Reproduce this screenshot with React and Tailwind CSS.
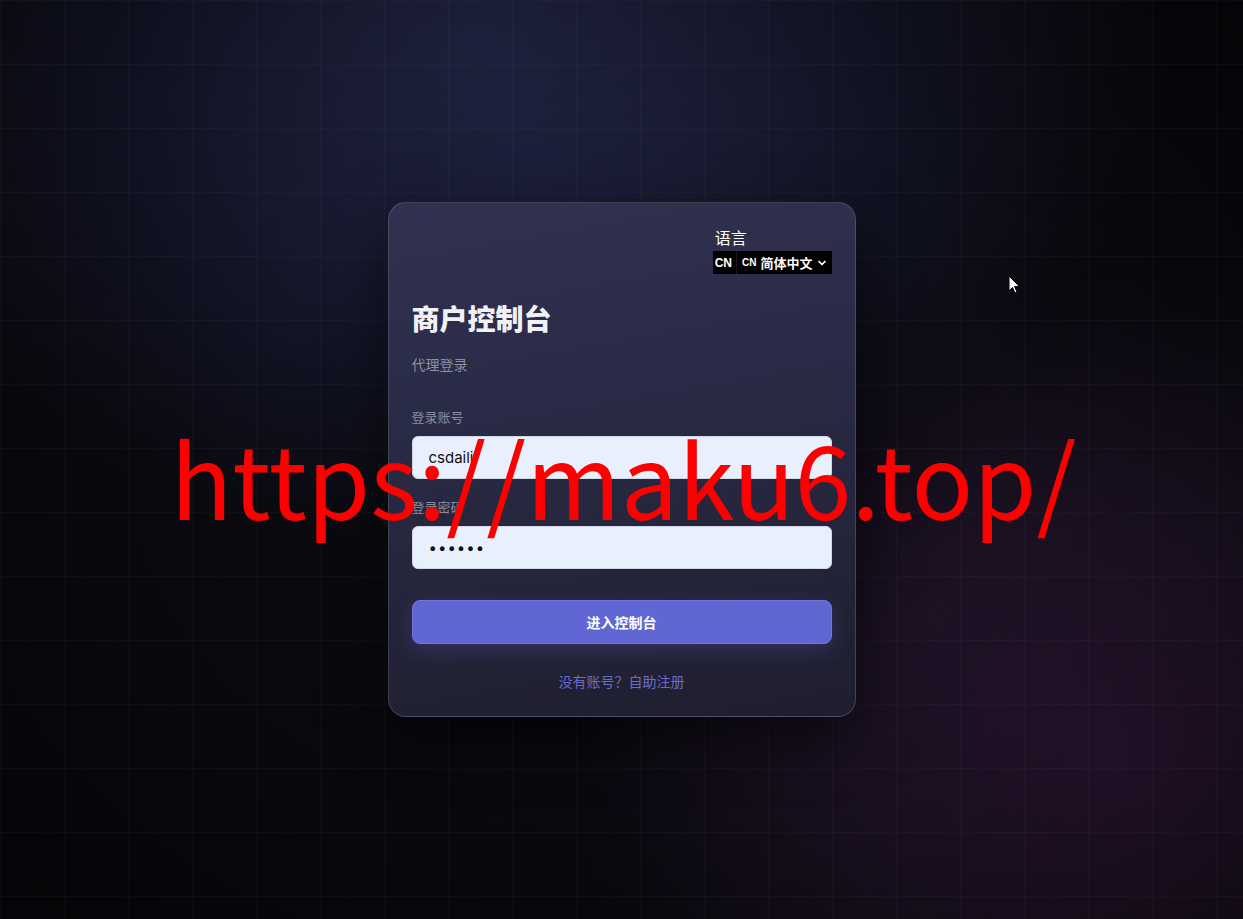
import { ChevronDown } from "lucide-react";

function LangPicker() {
  return (
    <div className="flex flex-col items-start">
      <span className="ml-[2px] text-[16px] leading-5 text-white font-['Noto_Sans_CJK_SC',sans-serif]">语言</span>
      <div className="mt-1 flex h-[23px] items-center bg-black pl-[2px] pr-1 text-white">
        <span className="text-[12px] font-bold font-['Liberation_Sans',sans-serif]">CN</span>
        <div className="ml-[4px] flex h-full items-center border-l border-white/10 pl-[5px]">
          <span className="text-[10px] font-bold font-['Liberation_Sans',sans-serif]">CN</span>
          <span className="ml-[4px] text-[13px] font-bold font-['Noto_Sans_CJK_SC',sans-serif]">简体中文</span>
          <ChevronDown size={12} strokeWidth={3.5} className="ml-[3px]" />
        </div>
      </div>
    </div>
  );
}

function Field({ label, type, value, className }) {
  return (
    <div className={className}>
      <div className="text-[13px] leading-[18px] text-[#8b8d9f] font-['Noto_Sans_CJK_SC',sans-serif]">{label}</div>
      <input
        type={type}
        defaultValue={value}
        readOnly
        className={`mt-[10px] block h-[43px] w-full rounded-md border border-[#cfd6e6] bg-[#e8f0fe] px-4 text-[15px] text-[#111] outline-none ${type === "password" ? "tracking-[1px]" : ""} font-['Inter',sans-serif]`}
      />
    </div>
  );
}

export default function App() {
  return (
    <div className="relative flex h-[919px] w-full items-center justify-center overflow-hidden bg-[#09090f]">
      {/* backdrop glow */}
      <div className="absolute inset-0 bg-[radial-gradient(ellipse_680px_500px_at_480px_40px,#222645_0%,#191b33_40%,transparent_100%)]" />
      <div className="absolute inset-0 bg-[radial-gradient(ellipse_540px_480px_at_1120px_760px,#2b1431_0%,#1c1123_50%,transparent_100%)]" />
      <div className="absolute inset-0 bg-[radial-gradient(ellipse_900px_700px_at_620px_450px,transparent_40%,rgba(0,0,0,0.45)_100%)]" />
      <div className="absolute inset-0 bg-[linear-gradient(rgba(255,255,255,0.025)_1px,transparent_1px),linear-gradient(90deg,rgba(255,255,255,0.025)_1px,transparent_1px)] bg-[size:64px_64px]" />

      <div className="relative w-[468px] rounded-[18px] border border-white/15 bg-[linear-gradient(170deg,#313251_0%,#2a2b47_35%,#1f1e2e_100%)] px-[23px] pt-6 pb-[25px] shadow-[0_20px_60px_rgba(0,0,0,0.55)]">
        <div className="flex justify-end">
          <LangPicker />
        </div>

        <h1 className="mt-[27px] text-[28px] leading-[35px] font-black text-[#f1f1f5] font-['Noto_Sans_CJK_SC',sans-serif]">商户控制台</h1>
        <p className="mt-[18px] text-[14px] leading-5 text-[#8d8fa3] font-['Noto_Sans_CJK_SC',sans-serif]">代理登录</p>

        <Field label="登录账号" type="text" value="csdaili" className="mt-[34px]" />
        <Field label="登录密码" type="password" value="123456" className="mt-[19px]" />

        <button
          type="button"
          className="mt-[31px] h-[44px] w-full rounded-lg border border-[#7076e0] bg-[#6067d3] text-[14px] font-bold text-white shadow-[0_6px_20px_rgba(96,103,211,0.25)] font-['Noto_Sans_CJK_SC',sans-serif]"
        >
          进入控制台
        </button>

        <div className="mt-[27px] text-center text-[14px] leading-5 text-[#676ccf] font-['Noto_Sans_CJK_SC',sans-serif]">
          没有账号？自助注册
        </div>
      </div>

      {/* watermark */}
      <div className="pointer-events-none absolute inset-x-0 top-[425px] pl-[4px] text-center text-[102px] leading-none text-[#ff0000] font-['Noto_Sans_CJK_SC',sans-serif]">
        https://maku6.top/
      </div>

      {/* mouse pointer */}
      <svg className="absolute left-[1008px] top-[275px]" width="13" height="19" viewBox="0 0 13 19">
        <path d="M1 1 L1 16 L4.5 12.5 L7 18 L9 17 L6.6 11.6 L11.5 11.6 Z" fill="#fff" stroke="#000" strokeWidth="1" />
      </svg>
    </div>
  );
}
